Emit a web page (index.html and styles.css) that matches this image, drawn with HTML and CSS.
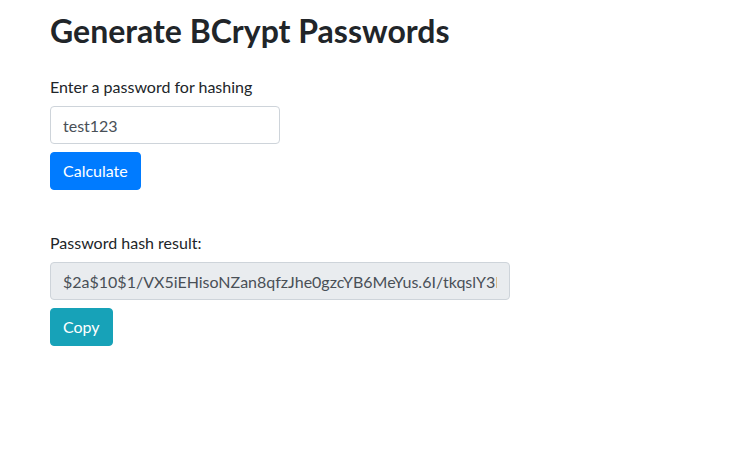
FILE: index.html
```html
<!DOCTYPE html>
<html>
<head>
<meta charset="utf-8">
<title>Generate BCrypt Passwords</title>
<link rel="stylesheet" href="styles.css">
</head>
<body>
<main class="container">
  <h2 class="title">Generate BCrypt Passwords</h2>
  <form class="form-section">
    <label class="label" for="pw">Enter a password for hashing</label>
    <input class="form-control short" id="pw" type="text" value="test123">
    <button class="btn btn-primary" type="button">Calculate</button>
  </form>
  <div class="form-section result">
    <label class="label" for="hash">Password hash result:</label>
    <input class="form-control wide" id="hash" type="text" readonly value="$2a$10$1/VX5iEHisoNZan8qfzJhe0gzcYB6MeYus.6I/tkqslY3BIZzWe2K">
    <button class="btn btn-info" type="button">Copy</button>
  </div>
</main>
</body>
</html>
```
FILE: styles.css
```css
* { box-sizing: border-box; }
html, body { margin: 0; padding: 0; background: #fff; }
body {
  font-family: "Lato", "Liberation Sans", sans-serif;
  font-size: 16px;
  line-height: 1.5;
  color: #212529;
}
.container {
  padding: 12px 50px;
}
.title {
  margin: 0 0 25px;
  font-size: 32px;
  font-weight: 700;
  line-height: 1.2;
  color: #212529;
}
.form-section {
  display: flex;
  flex-direction: column;
  align-items: flex-start;
  margin: 0;
}
.result { margin-top: 41px; }
.label {
  display: block;
  margin-bottom: 7px;
  line-height: 24px;
}
.form-control {
  display: block;
  height: 38px;
  padding: 6px 12px;
  font-family: inherit;
  font-size: 16px;
  line-height: 1.5;
  color: #495057;
  background: #fff;
  border: 1px solid #ced4da;
  border-radius: 4px;
  margin: 0 0 8px;
  outline: none;
}
.form-control[readonly] { background: #e9ecef; }
.short { width: 230px; }
.wide { width: 460px; }
.btn {
  display: inline-block;
  height: 38px;
  padding: 6px 12px;
  font-family: inherit;
  font-size: 16px;
  line-height: 1.5;
  color: #fff;
  border: 1px solid transparent;
  border-radius: 4px;
  cursor: pointer;
}
.btn-primary { background: #007bff; border-color: #007bff; }
.btn-info { background: #17a2b8; border-color: #17a2b8; }
```
